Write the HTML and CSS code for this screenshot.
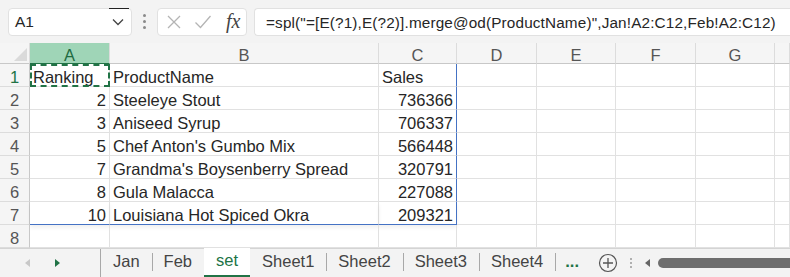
FILE: index.html
```html
<!DOCTYPE html>
<html lang="en">
<head>
    <meta charset="UTF-8">
    <title>set</title>
    <link rel="stylesheet" href="styles.css">
</head>
<body>
    <div class="formula-bar">
        <div class="name-box">
            <span>A1</span>
            <svg class="chevron" width="12" height="8" viewBox="0 0 12 8"><path d="M1 1.5 L6 6.5 L11 1.5" fill="none" stroke="#444" stroke-width="1.3"/></svg>
        </div>
        <div class="grip"><i></i><i></i><i></i></div>
        <div class="fx-buttons">
            <svg width="16" height="16" viewBox="0 0 16 16"><path d="M2 2 L14 14 M14 2 L2 14" stroke="#b4b4b4" stroke-width="1.3"/></svg>
            <svg width="18" height="16" viewBox="0 0 18 16"><path d="M1.5 8.5 L6.5 13.5 L16.5 2" fill="none" stroke="#b4b4b4" stroke-width="1.3"/></svg>
            <span class="fx">fx</span>
        </div>
        <div class="formula-input">=spl("=[E(?1),E(?2)].merge@od(ProductName)",Jan!A2:C12,Feb!A2:C12)</div>
    </div>

    <div class="sheet">
        <div class="corner"></div>
        <div class="col-head active">A</div>
        <div class="col-head">B</div>
        <div class="col-head">C</div>
        <div class="col-head">D</div>
        <div class="col-head">E</div>
        <div class="col-head">F</div>
        <div class="col-head">G</div>
        <div class="col-head"></div>

        <div class="row-head active">1</div>
        <div class="cell sel">Ranking</div>
        <div class="cell">ProductName</div>
        <div class="cell edge">Sales</div>
        <div class="cell"></div><div class="cell"></div><div class="cell"></div><div class="cell"></div><div class="cell"></div>

        <div class="row-head">2</div>
        <div class="cell num">2</div>
        <div class="cell">Steeleye Stout</div>
        <div class="cell num edge">736366</div>
        <div class="cell"></div><div class="cell"></div><div class="cell"></div><div class="cell"></div><div class="cell"></div>

        <div class="row-head">3</div>
        <div class="cell num">3</div>
        <div class="cell">Aniseed Syrup</div>
        <div class="cell num edge">706337</div>
        <div class="cell"></div><div class="cell"></div><div class="cell"></div><div class="cell"></div><div class="cell"></div>

        <div class="row-head">4</div>
        <div class="cell num">5</div>
        <div class="cell">Chef Anton's Gumbo Mix</div>
        <div class="cell num edge">566448</div>
        <div class="cell"></div><div class="cell"></div><div class="cell"></div><div class="cell"></div><div class="cell"></div>

        <div class="row-head">5</div>
        <div class="cell num">7</div>
        <div class="cell">Grandma's Boysenberry Spread</div>
        <div class="cell num edge">320791</div>
        <div class="cell"></div><div class="cell"></div><div class="cell"></div><div class="cell"></div><div class="cell"></div>

        <div class="row-head">6</div>
        <div class="cell num">8</div>
        <div class="cell">Gula Malacca</div>
        <div class="cell num edge">227088</div>
        <div class="cell"></div><div class="cell"></div><div class="cell"></div><div class="cell"></div><div class="cell"></div>

        <div class="row-head">7</div>
        <div class="cell num bottom">10</div>
        <div class="cell bottom">Louisiana Hot Spiced Okra</div>
        <div class="cell num edge bottom">209321</div>
        <div class="cell"></div><div class="cell"></div><div class="cell"></div><div class="cell"></div><div class="cell"></div>

        <div class="row-head">8</div>
        <div class="cell"></div><div class="cell"></div><div class="cell"></div>
        <div class="cell"></div><div class="cell"></div><div class="cell"></div><div class="cell"></div><div class="cell"></div>
    </div>

    <div class="tab-bar">
        <div class="tab-nav">
            <svg width="8" height="10" viewBox="0 0 8 10"><path d="M6 1 L1 5 L6 9 Z" fill="#c8c8c8"/></svg>
            <svg width="8" height="10" viewBox="0 0 8 10"><path d="M2 1 L7 5 L2 9 Z" fill="#217346"/></svg>
        </div>
        <div class="tabs">
            <div class="tab">Jan</div>
            <div class="tab">Feb</div>
            <div class="tab current">set</div>
            <div class="tab">Sheet1</div>
            <div class="tab">Sheet2</div>
            <div class="tab">Sheet3</div>
            <div class="tab">Sheet4</div>
            <div class="tab more">...</div>
        </div>
        <svg class="add" width="20" height="20" viewBox="0 0 20 20"><circle cx="10" cy="10" r="8.5" fill="none" stroke="#555" stroke-width="1.2"/><path d="M10 5 V15 M5 10 H15" stroke="#555" stroke-width="1.3"/></svg>
        <div class="grip small"><i></i><i></i><i></i></div>
        <div class="hscroll">
            <svg width="8" height="10" viewBox="0 0 8 10"><path d="M6 1 L1 5 L6 9 Z" fill="#666"/></svg>
            <div class="thumb"></div>
        </div>
    </div>
</body>
</html>
```

FILE: styles.css
```css
/* General */
body {
    margin: 0;
    width: 790px;
    height: 277px;
    overflow: hidden;
    background-color: #f3f3f3;
    font-family: "Liberation Sans", Arial, sans-serif;
    color: #262626;
}

/* Formula bar */
.formula-bar {
    display: flex;
    align-items: center;
    height: 43px;
    padding-left: 8px;
    box-sizing: border-box;
}

.name-box {
    display: flex;
    align-items: center;
    justify-content: space-between;
    width: 124px;
    height: 28px;
    box-sizing: border-box;
    padding: 0 7px 0 6px;
    background-color: #fff;
    border: 1px solid #e1e1e1;
    border-radius: 4px;
    font-size: 15.5px;
    position: relative;
}

.name-box::after {
    content: "";
    position: absolute;
    top: -1px;
    right: 2px;
    width: 20px;
    height: 1px;
    background-color: #222;
}

.grip {
    display: flex;
    flex-direction: column;
    gap: 3px;
    margin: 0 11px 0 11px;
}

.grip i {
    display: block;
    width: 3px;
    height: 3px;
    border-radius: 50%;
    background-color: #8a8a8a;
}

.fx-buttons {
    display: flex;
    align-items: center;
    gap: 12px;
    width: 90px;
    height: 28px;
    box-sizing: border-box;
    padding-left: 8px;
    background-color: #fff;
    border: 1px solid #e1e1e1;
    border-radius: 4px;
}

.fx {
    font-family: "Liberation Serif", serif;
    font-style: italic;
    font-size: 20px;
    color: #444;
    margin-left: 2px;
}

.formula-input {
    flex: 1;
    height: 28px;
    line-height: 27px;
    margin-left: 7px;
    box-sizing: border-box;
    padding-left: 11px;
    background-color: #fff;
    border: 1px solid #e1e1e1;
    border-right: none;
    border-radius: 4px 0 0 4px;
    font-size: 15.3px;
    letter-spacing: 0.15px;
    white-space: nowrap;
    overflow: hidden;
}

/* Grid */
.sheet {
    display: grid;
    grid-template-columns: 30px 80px 269px 78px 80px 79px 80px 79px 1fr;
    grid-template-rows: 21px repeat(8, 23px);
    background-color: #fff;
    font-size: 16.5px;
}

.corner {
    background-color: #f5f5f5;
    border-bottom: 1px solid #c8c8c8;
    border-right: 1px solid #dcdcdc;
    position: relative;
}

.corner::after {
    content: "";
    position: absolute;
    right: 2px;
    bottom: 2px;
    border-left: 13px solid transparent;
    border-bottom: 13px solid #dadada;
}

.col-head {
    background-color: #f5f5f5;
    border-bottom: 1px solid #c8c8c8;
    border-right: 1px solid #dcdcdc;
    text-align: center;
    line-height: 25px;
    color: #555;
    overflow: hidden;
}

.col-head.active {
    background-color: #9fd5b7;
    color: #1e6b41;
    border-bottom: 1px solid #217346;
}

.row-head {
    background-color: #f5f5f5;
    border-bottom: 1px solid #dcdcdc;
    border-right: 1px solid #c8c8c8;
    text-align: center;
    line-height: 27px;
    color: #555;
    overflow: hidden;
}

.row-head.active {
    color: #217346;
}

.cell {
    border-bottom: 1px solid #e1e1e1;
    border-right: 1px solid #e1e1e1;
    padding: 0 3px;
    line-height: 27px;
    white-space: nowrap;
}

.cell.num {
    text-align: right;
}

.cell.edge {
    border-right: 1px solid #4472c4;
}

.cell.bottom {
    border-bottom: 1px solid #4472c4;
    box-shadow: 0 3px 4px rgba(0, 0, 0, 0.06);
}

.cell.sel {
    outline: 2px dashed #217346;
    outline-offset: -2px;
    box-shadow: inset 0 0 0 2px #fff;
}

/* Tab bar */
.tab-bar {
    display: flex;
    align-items: center;
    height: 29px;
    border-top: 1px solid #d4d4d4;
    box-sizing: border-box;
}

.tab-nav {
    display: flex;
    align-items: center;
    gap: 21px;
    width: 100px;
    padding-left: 24px;
    box-sizing: border-box;
}

.tabs {
    display: flex;
    align-items: stretch;
    height: 28px;
    border-left: 1px solid #a8a8a8;
}

.tab {
    padding: 0 12px;
    font-size: 16.5px;
    line-height: 24px;
    color: #444;
    position: relative;
}

.tab + .tab::before {
    content: "";
    position: absolute;
    left: 0;
    top: 4px;
    height: 18px;
    width: 1px;
    background-color: #a8a8a8;
}

.tab.current {
    background-color: #fff;
    color: #217346;
    border-bottom: 2px solid #217346;
    margin-top: -1px;
    line-height: 25px;
}

.tab.current::before,
.tab.current + .tab::before {
    display: none;
}

.tab.more {
    color: #217346;
    font-weight: bold;
    padding: 0 12px 0 10px;
}

.add {
    margin-left: 7px;
}

.grip.small {
    margin: 0 12px 0 12px;
    gap: 2px;
}

.grip.small i {
    width: 2px;
    height: 2px;
    border-radius: 0;
    background-color: #b0b0b0;
}

.hscroll {
    flex: 1;
    display: flex;
    align-items: center;
    gap: 6px;
}

.thumb {
    flex: 1;
    height: 10px;
    background-color: #6e6e6e;
    border-radius: 5px 0 0 5px;
}
```
